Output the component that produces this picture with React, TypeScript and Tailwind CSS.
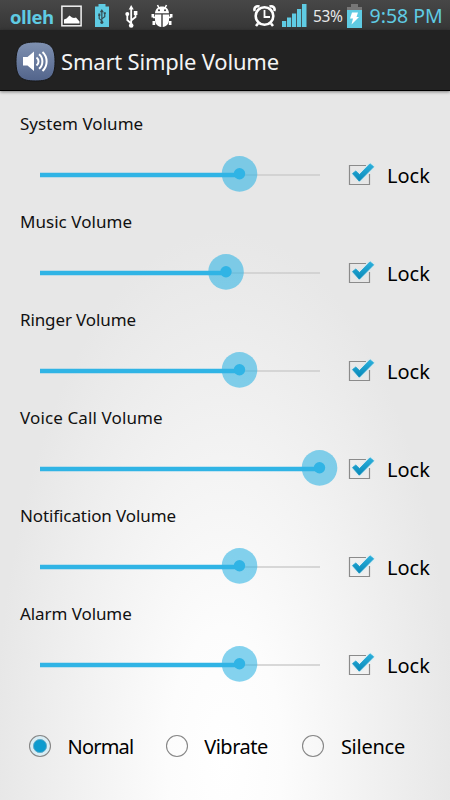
import React from "react";

const volumes = [
  { name: "System Volume", value: 199.5, tracking: "tracking-[0.04px]" },
  { name: "Music Volume", value: 186, tracking: "tracking-[0.04px]" },
  { name: "Ringer Volume", value: 199.5, tracking: "tracking-[-0.12px]" },
  { name: "Voice Call Volume", value: 279.5, tracking: "tracking-[0.12px]" },
  { name: "Notification Volume", value: 199.5, tracking: "tracking-[-0.1px]" },
  { name: "Alarm Volume", value: 199.5, tracking: "tracking-[-0.08px]" },
];

const USB = "M5.2 22 V3 M5.2 18.5 L1.3 15 V9.500 M5.2 15.500 L9.500 12 V7";

function StatusBar() {
  return (
    <div className="flex h-[30px] items-center bg-gradient-to-b from-[#474747] to-[#363636] text-[#5fcbe3]">
      <span className="ml-[10px] mt-[2px] w-[51px] whitespace-nowrap font-['Open_Sans','Noto_Sans',sans-serif] text-[18.500px] font-bold leading-[27px] tracking-[-0.4px]">olleh</span>
      <svg className="mt-[2px] h-[22px] w-[21px]" viewBox="0 0 21 22">
        <rect x="0.9" y="1.2" width="19.2" height="19.6" fill="none" stroke="#f2f2f2" strokeWidth="1.5" />
        <path d="M3 18.500V14.500l2.500-1 3-3 2.500 2 2 .5 2-.5 3.500 4v2z" fill="#fff" />
      </svg>
      <svg className="ml-[13px] h-[24px] w-[14px]" viewBox="0 0 14 24">
        <path d="M3.500 1h7v2.500H14V24H0V3.500h3.500z" fill="#5fcbe3" />
        <g transform="translate(3.300 6) scale(.68 .64)">
          <path d={USB} fill="none" stroke="#344b52" strokeWidth="1.800" />
          <path d="M5.200 0l3 5h-6z" fill="#344b52" />
          <circle cx="5.200" cy="21" r="2.300" fill="#344b52" />
          <path d="M0 7h3v4H0zM8 5h3v3H8z" fill="#344b52" />
        </g>
      </svg>
      <svg className="ml-[16px] mt-[2px] h-[23px] w-[13px]" viewBox="-1 0 13 23">
        <path d={USB} fill="none" stroke="#fff" strokeWidth="1.800" />
        <path d="M5.200 0l2.500 4.500h-5z" fill="#fff" />
        <circle cx="5.200" cy="20.500" r="2.300" fill="#fff" />
        <path d="M7.800 6h3.600v4H7.800z" fill="#fff" />
        <circle cx="1.300" cy="9" r="2" fill="#fff" />
      </svg>
      <svg className="ml-[13px] mt-[1px] h-[24px] w-[22px]" viewBox="0 0 22 24">
        <path d="M6.500 1l1.800 3.500M15.500 1l-1.800 3.500" fill="none" stroke="#fff" strokeWidth="1.600" />
        <path d="M4 9.300C4.200 5 7 2.500 11 2.500s6.800 2.500 7 6.800z" fill="#fff" />
        <path d="M4 10.500h6.300V23C6.500 22.600 4 19.500 4 16zM11.700 10.500H18V16c0 3.500-2.500 6.600-6.300 7z" fill="#fff" />
        <path d="M.5 10h2.700v3.500H.5zM18.800 10h2.700v3.500h-2.700zM1.500 17h2.700v4H1.500zM17.800 17h2.700v4h-2.700zM2 12.500h3v1.800H2zM17 12.500h3v1.800h-3z" fill="#fff" />
        <circle cx="8" cy="6.300" r="1" fill="#3d3d3d" /><circle cx="14" cy="6.300" r="1" fill="#3d3d3d" />
      </svg>
      <svg className="ml-auto mt-[1px] h-[24px] w-[23px]" viewBox="0 0 23 24">
        <circle cx="11.500" cy="12" r="8.800" fill="none" stroke="#fff" strokeWidth="2.600" />
        <path d="M1.800 7C.5 4 3 1.500 6.500 2.500M21.200 7C22.500 4 20 1.500 16.500 2.500M5 19.500l-2 2.500M18 19.500l2 2.500" fill="none" stroke="#fff" strokeWidth="2.600" />
        <path d="M11.500 6v7H17" fill="none" stroke="#fff" strokeWidth="1.800" />
      </svg>
      <svg className="ml-[6px] h-[24px] w-[25px]" viewBox="0 0 25 24" fill="#5fcbe3">
        <path d="M0 18h4.200v6H0zM5 14.500h4.200V24H5zM10 10.500h4.200V24H10zM15 6h4.200v18H15zM20 1h4.500v23H20z" />
      </svg>
      <span className="ml-[6px] mt-[2px] w-[34px] whitespace-nowrap font-['Noto_Sans',sans-serif] text-[15.500px] leading-[28px] tracking-[-0.4px] text-[#e8e8e8]">53%</span>
      <svg className="mt-[1px] h-[24px] w-[15px]" viewBox="0 0 15 24">
        <path d="M4 0h7v3h4v5H0V3h4z" fill="#777" />
        <path d="M0 6h15v18H0z" fill="#5fcbe3" />
        <path d="M5 8.500h6l-1.500 4.500H12L4.500 20.500l1.500-6H3z" fill="#fff" />
      </svg>
      <span className="ml-[7.500px] mt-[2px] w-[80.500px] whitespace-nowrap font-['Noto_Sans',sans-serif] text-[19.500px] leading-[28px]">9:58 PM</span>
    </div>
  );
}

function Header() {
  return (
    <header className="flex h-[61px] items-center border-b border-black bg-[#222222] shadow-[0_1px_3px_rgba(0,0,0,0.45)]">
      <svg className="ml-[15px] mt-[2px] h-[41px] w-[41px]" viewBox="0 0 41 41">
        <defs><linearGradient id="appIcon" x1="0" x2="0" y1="0" y2="1"><stop stopColor="#7f91b1" /><stop offset="1" stopColor="#52648b" /></linearGradient></defs>
        <path d="M20.500 1C35 1 40 5 40 20.500S35 40 20.500 40 1 36 1 20.500 6 1 20.500 1z" fill="url(#appIcon)" stroke="#171717" />
        <path d="M8 16h4.500L19 10.500v19.500l-6.500-5.500H8z" fill="#fff" />
        <g fill="none" stroke="#fff" strokeWidth="2">
          <path d="M21.500 16.500c2.700 2 2.700 6 0 8" />
          <path d="M24 13.300c4.500 3.500 4.500 11 0 14.500" />
          <path d="M27.500 11c5.500 5 5.500 14 0 19" />
        </g>
      </svg>
      <h1 className="ml-[5px] mt-[1px] whitespace-nowrap text-[22px] leading-[30px] tracking-[-0.2px] text-[#f4f4f4]">Smart Simple Volume</h1>
    </header>
  );
}

function Checkbox() {
  return (
    <svg className="h-[28px] w-[30px] shrink-0" viewBox="0 0 30 28">
      <defs>
        <linearGradient id="tick" x1="0" x2="0" y1="0" y2="1"><stop stopColor="#2cb0dc" /><stop offset="1" stopColor="#0788b8" /></linearGradient>
        <filter id="glow" x="-30%" y="-30%" width="160%" height="160%"><feGaussianBlur stdDeviation="1.200" /></filter>
      </defs>
      <path d="M21 4.500H4.500v19h20V13" fill="none" stroke="#8b8b8b" strokeWidth="1.200" />
      <path d="M8 13l3-2.500 3.500 4L25 3l3.500 2.800L14.500 20z" fill="#b4e6f5" stroke="#b4e6f5" strokeWidth="1" filter="url(#glow)" />
      <path d="M7.500 12.600l3.300-2.600 3.700 3.600L25 2.800l3.700 3L14.300 20.200z" fill="url(#tick)" stroke="url(#tick)" strokeWidth=".8" strokeLinejoin="round" />
    </svg>
  );
}

function VolumeRow({ name, value, tracking }: { name: string; value: number; tracking: string }) {
  return (
    <section className="h-[98.100px]">
      <h2 className={`ml-5 h-5 whitespace-nowrap text-[17px] leading-5 text-[#111111] ${tracking}`}>{name}</h2>
      <div className="mt-5 flex h-10 items-center">
        <svg className="ml-5 h-10 w-[320px] shrink-0" viewBox="0 0 320 40">
          <path d="M20 21H300" stroke="#cccccc" strokeWidth="1.300" />
          <circle cx={20 + value} cy="19.900" r="17.800" fill="#33b5e5" fillOpacity=".6" />
          <path d={`M20 21H${20 + value}`} stroke="#30b4e5" strokeWidth="4.300" />
          <circle cx={20 + value} cy="19.700" r="5.700" fill="#30b4e5" />
        </svg>
        <div className="ml-[5px] mt-[2px] flex items-center">
          <Checkbox />
          <span className="ml-[12px] mt-[2px] whitespace-nowrap text-[20px] leading-6 text-black">Lock</span>
        </div>
      </div>
    </section>
  );
}

function Radio({ label, tracking, selected = false }: { label: string; tracking: string; selected?: boolean }) {
  return (
    <div className="flex w-[136.700px] items-center">
      <svg className="h-6 w-6 shrink-0" viewBox="0 0 24 24">
        <circle cx="12" cy="12" r="10.500" fill={selected ? "#d9edf4" : "none"} stroke="#878787" strokeWidth="1.100" />
        {selected && <circle cx="12" cy="12" r="6.600" fill="#0c9bce" stroke="#65aeca" strokeWidth="1" />}
      </svg>
      <span className={`ml-[15.500px] mt-[2px] whitespace-nowrap text-[20px] leading-6 text-black ${tracking}`}>{label}</span>
    </div>
  );
}

export default function App() {
  return (
    <div className="flex h-[800px] w-[450px] flex-col overflow-hidden bg-[radial-gradient(ellipse_230px_530px_at_225px_760px,#ffffff_0%,#fcfcfc_25%,#e7e7e7_100%)] font-['Noto_Sans',sans-serif]">
      <StatusBar />
      <Header />
      <main className="pt-[22.700px]">
        {volumes.map((v) => <VolumeRow key={v.name} {...v} />)}
        <div className="ml-7 mt-[30.500px] flex">
          <Radio label="Normal" tracking="tracking-[-0.8px]" selected />
          <Radio label="Vibrate" tracking="tracking-[-0.5px]" />
          <Radio label="Silence" tracking="tracking-[-0.250px]" />
        </div>
      </main>
    </div>
  );
}
